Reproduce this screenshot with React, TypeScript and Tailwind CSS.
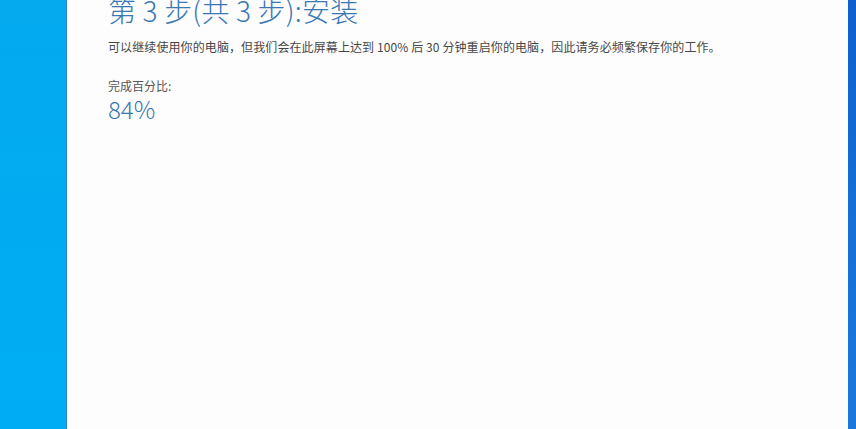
import React from "react";

export default function App() {
  return (
    <div
      className="flex h-[429px] w-[856px] overflow-hidden"
      style={{ fontFamily: '"Noto Sans CJK SC", "Noto Sans", sans-serif' }}
    >
      <div className="w-[66px] h-full bg-gradient-to-b from-[#04a9ee] to-[#00adf4]" />
      <div className="w-[1px] h-full bg-[#2a86c4]" />
      <div className="flex-1 h-full bg-[#fdfdfd] pl-[41px] flex flex-col">
        <div className="mt-[-8px] text-[28px] leading-[36px] font-light text-[#3b78b3] tracking-[0.2px]">
          第 3 步(共 3 步):安装
        </div>
        <div className="mt-[10px] text-[12px] leading-[18px] text-[#474747] tracking-[0.1px]">
          可以继续使用你的电脑，但我们会在此屏幕上达到 100% 后 30 分钟重启你的电脑，因此请务必频繁保存你的工作。
        </div>
        <div className="mt-[22px] text-[12px] leading-[16px] text-[#555555]">完成百分比:</div>
        <div className="mt-[1px] text-[24px] leading-[28px] font-light text-[#3b78b3]">84%</div>
      </div>
      <div className="w-[8px] h-full bg-gradient-to-b from-[#0f5fd0] via-[#1470d8] to-[#1a78dc]" />
    </div>
  );
}
